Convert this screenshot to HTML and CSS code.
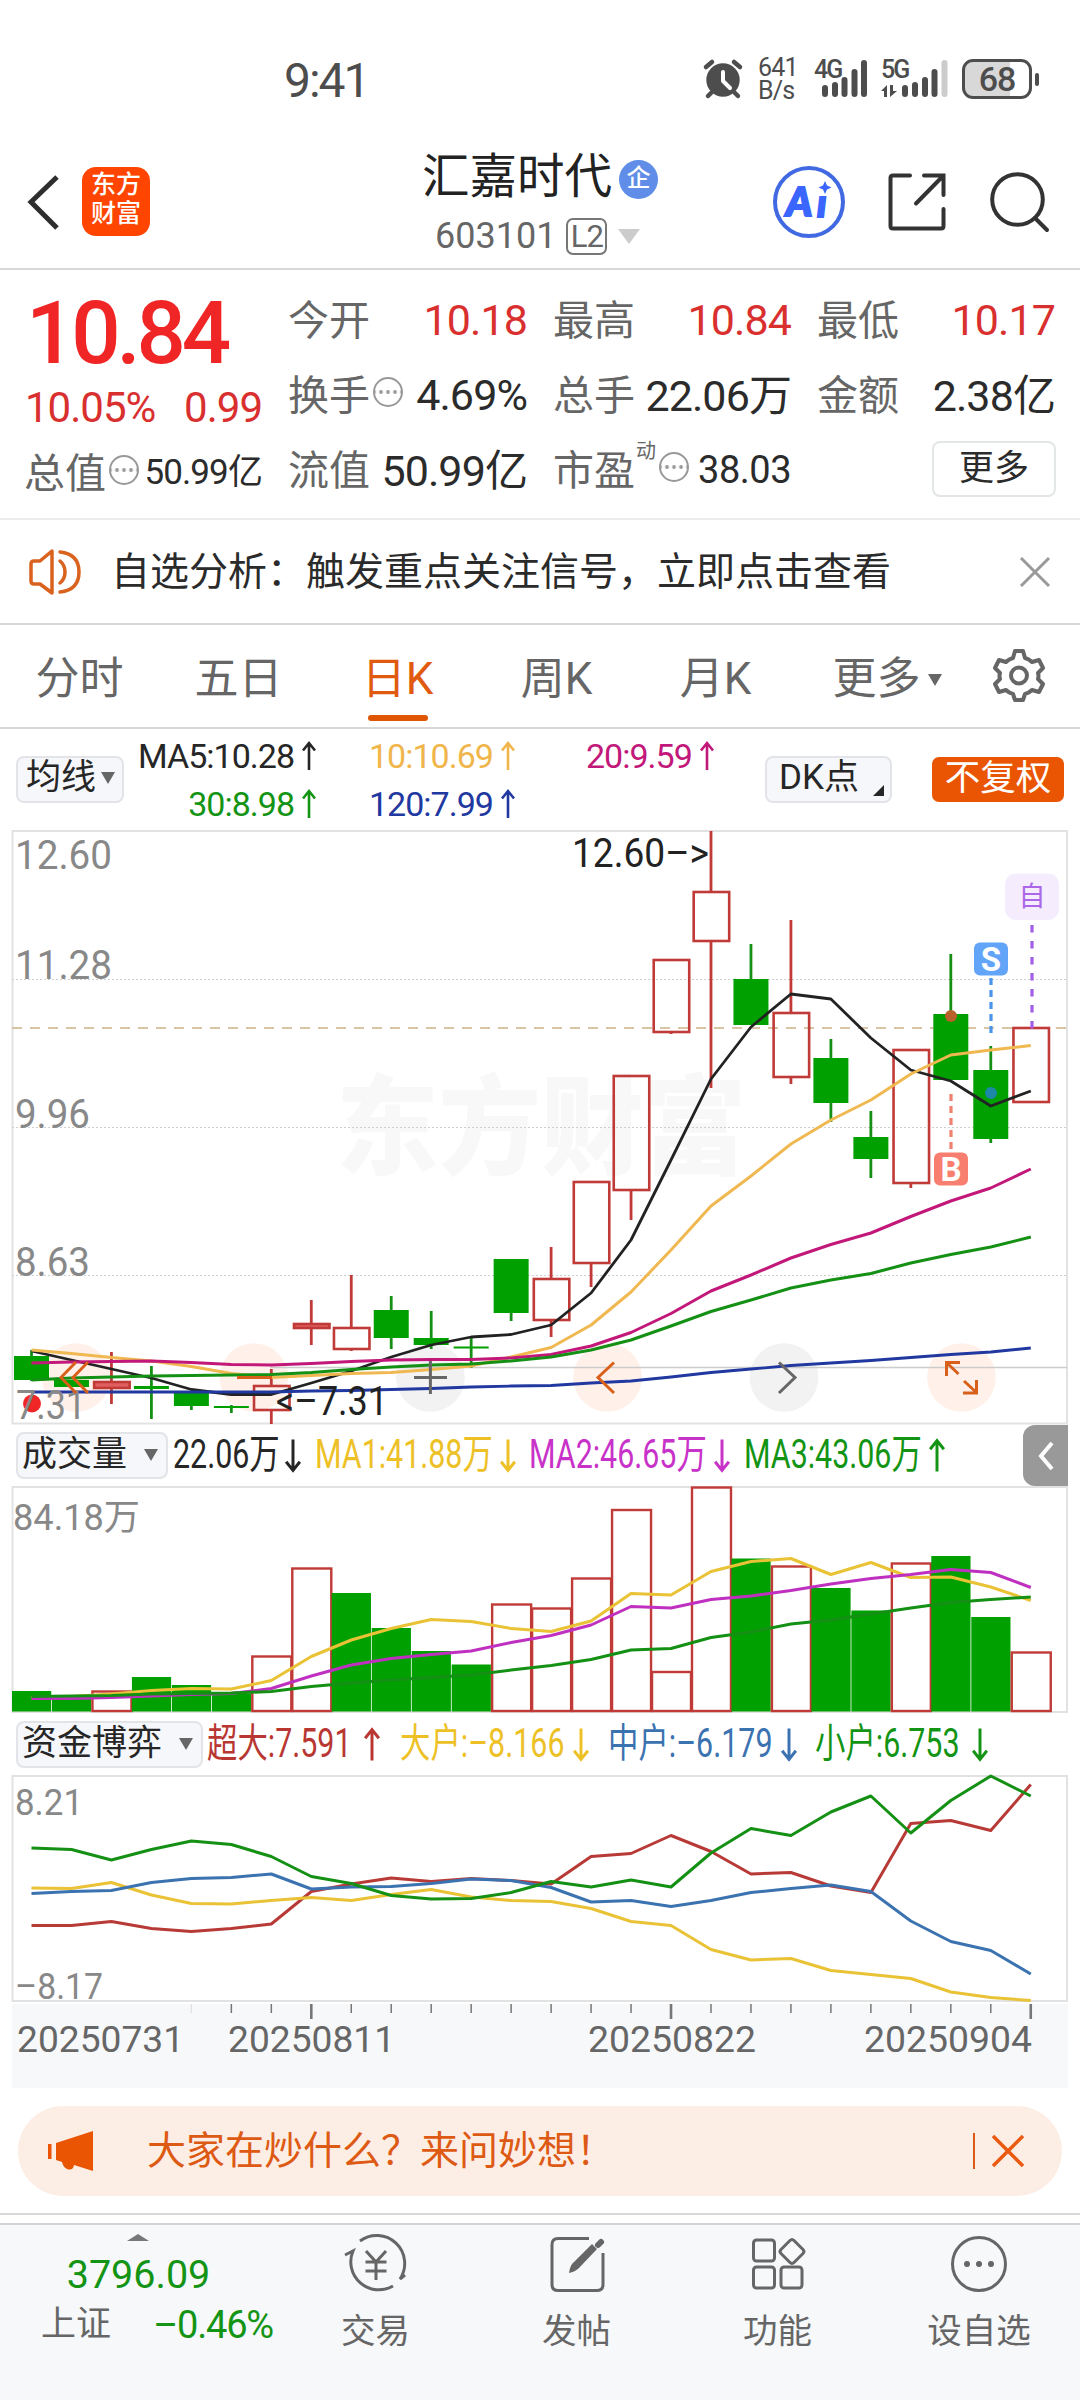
FILE: index.html
```
<!DOCTYPE html>
<html lang="zh-CN">
<head>
  <meta charset="UTF-8" />
  <meta name="viewport" content="width=device-width, initial-scale=1.0"/>
  <title>汇嘉时代 603101</title>
  <link rel="stylesheet" href="styles.css">
</head>
<body>
  <!-- Status bar -->
  <div class="status">
    <span class="clock">9:41</span>
    <div class="status-icons">
      <svg class="alarm" width="40" height="40" viewBox="0 0 40 40">
        <circle cx="20" cy="21" r="16.7" fill="#4d4d4d"/>
        <path d="M3 8l6-5M37 8l-6-5M9 33l-4 4M31 33l4 4" stroke="#4d4d4d" stroke-width="4.5" stroke-linecap="round"/>
        <path d="M20 13v9l7 7" stroke="#fff" stroke-width="4" fill="none" stroke-linecap="round" stroke-linejoin="round"/>
      </svg>
      <span class="speed">641<br>B/s</span>
      <svg class="signal" width="54" height="40" viewBox="0 0 54 40">
        <text x="0" y="19" class="net">4G</text>
        <path d="M11 29v6M21 26v9M30.5 21v14M40.5 13v22M50 4v31" stroke="#4d4d4d" stroke-width="6" stroke-linecap="round"/>
      </svg>
      <svg class="signal2" width="68" height="40" viewBox="0 0 68 40">
        <text x="0" y="19" class="net">5G</text>
        <path d="M0 32l6-6v12H3V32zM9 26h3v6h4l-7 6z" fill="#4d4d4d"/>
        <path d="M24 29v6M34 26v9M44 21v14M53.5 13v22" stroke="#4d4d4d" stroke-width="6" stroke-linecap="round"/>
        <path d="M63.5 4v31" stroke="#ccc" stroke-width="6" stroke-linecap="round"/>
      </svg>
      <span class="battery">68</span>
      <span class="nub"></span>
    </div>
  </div>

  <!-- Header -->
  <header class="header">
    <svg class="back" width="34" height="60" viewBox="0 0 34 60"><path d="M30 5L4 30l26 26" fill="none" stroke="#2e2e2e" stroke-width="5"/></svg>
    <div class="logo">东方<br>财富</div>
    <div class="title">
      <div class="name"><span>汇嘉时代</span><span class="corp">企</span></div>
      <div class="code">603101<span class="l2">L2</span><span class="tri-down big"></span></div>
    </div>
    <svg class="ai" width="74" height="74" viewBox="0 0 74 74">
      <circle cx="37" cy="37" r="34" fill="none" stroke="#4169e1" stroke-width="4"/>
      <text x="14" y="51" class="ai-a">A</text>
      <text x="45" y="52" class="ai-i">ı</text>
      <path d="M53 16l2 4.500 4.500 2-4.500 2-2 4.500-2-4.500-4.500-2 4.500-2z" fill="#3a66ff"/>
    </svg>
    <svg class="share" width="60" height="60" viewBox="0 0 60 60">
      <path d="M23 3.5H6Q3.500 3.500 3.500 6V54q0 2.500 2.500 2.500H54q2.500 0 2.500-2.500V37M37 3.500H56.500V23M56 4L29 31.500" fill="none" stroke="#333" stroke-width="4" stroke-linecap="round"/>
    </svg>
    <svg class="search" width="62" height="62" viewBox="0 0 62 62">
      <circle cx="28.500" cy="28.500" r="25.300" fill="none" stroke="#333" stroke-width="4"/>
      <path d="M46 47l12 12" stroke="#333" stroke-width="4" stroke-linecap="round"/>
    </svg>
  </header>

  <!-- Quote numbers -->
  <section class="quote">
    <div class="col c1">
      <div class="price">10.84</div>
      <div class="change"><span>10.05%</span><span>0.99</span></div>
      <div class="item"><label>总值</label><i class="dots"></i><b class="small">50.99亿</b></div>
    </div>
    <div class="col">
      <div class="item"><label>今开</label><b class="up">10.18</b></div>
      <div class="item"><label>换手</label><i class="dots"></i><b>4.69%</b></div>
      <div class="item"><label>流值</label><b class="cn">50.99亿</b></div>
    </div>
    <div class="col">
      <div class="item"><label>最高</label><b class="up">10.84</b></div>
      <div class="item"><label>总手</label><b class="cn">22.06万</b></div>
      <div class="item"><label>市盈</label><sup>动</sup><i class="dots"></i><b class="mid">38.03</b></div>
    </div>
    <div class="col">
      <div class="item"><label>最低</label><b class="up">10.17</b></div>
      <div class="item"><label>金额</label><b class="cn">2.38亿</b></div>
      <div class="item"><button class="more">更多</button></div>
    </div>
  </section>

  <div class="alert">
    <svg width="54" height="46" viewBox="0 0 54 46" fill="none" stroke="#d9621e" stroke-width="3.500" stroke-linejoin="round">
      <path d="M2 15q0-3 3-3h6L23 2v42L11 35H5q-3 0-3-3z"/>
      <path d="M31 12q5 4 5 11t-5 11M31 3q19 2 19 20T31 43" stroke-linecap="round"/>
    </svg>
    <span>自选分析：触发重点关注信号，立即点击查看</span>
    <svg class="close" width="32" height="30" viewBox="0 0 32 30"><path d="M2 1l28 28M30 1L2 29" stroke="#999" stroke-width="3"/></svg>
  </div>

  <!-- Period tabs -->
  <nav class="tabs">
    <a>分时</a>
    <a>五日</a>
    <a class="active">日K</a>
    <a>周K</a>
    <a>月K</a>
    <a class="last">更多<span class="tri-down"></span></a>
    <svg width="52" height="54" viewBox="0 0 52 54" fill="none" stroke="#666" stroke-width="4" stroke-linejoin="round">
      <path d="M22 3h8l2 7q4 1 7 4l7-2 4 8-5 5q1 3 0 6l5 5-4 8-7-2q-3 3-7 4l-2 6h-8l-2-6q-4-1-7-4l-7 2-4-8 5-5q-1-3 0-6l-5-5 4-8 7 2q3-3 7-4z"/>
      <circle cx="26" cy="27.500" r="8"/>
    </svg>
  </nav>

  <div class="ma-row">
    <span class="pill">均线<span class="tri-down"></span></span>
    <div class="ma">
      <span class="k right">MA5:10.28<svg class="arw" viewBox="0 0 14 30"><use href="#up"/></svg></span>
      <span class="y">10:10.69<svg class="arw" viewBox="0 0 14 30"><use href="#up"/></svg></span>
      <span class="m">20:9.59<svg class="arw" viewBox="0 0 14 30"><use href="#up"/></svg></span>
      <span class="g right">30:8.98<svg class="arw" viewBox="0 0 14 30"><use href="#up"/></svg></span>
      <span class="b">120:7.99<svg class="arw" viewBox="0 0 14 30"><use href="#up"/></svg></span>
    </div>
    <span class="pill dk">DK点</span>
    <span class="fq">不复权</span>
  </div>

  <svg id="kline" width="1080" height="595" viewBox="0 0 1080 595"></svg>

  <div class="legend">
    <span class="pill">成交量<span class="tri-down"></span></span>
    <div class="vals v1">
      <span class="k"><em>22.06万</em><svg class="arw" viewBox="0 0 14 30"><use href="#down"/></svg></span>
      <span class="y2"><em>MA1:41.88万</em><svg class="arw" viewBox="0 0 14 30"><use href="#down"/></svg></span>
      <span class="p"><em>MA2:46.65万</em><svg class="arw" viewBox="0 0 14 30"><use href="#down"/></svg></span>
      <span class="g"><em>MA3:43.06万</em><svg class="arw" viewBox="0 0 14 30"><use href="#up"/></svg></span>
    </div>
    <span class="drawer"><svg width="20" height="32" viewBox="0 0 20 32"><path d="M16 3L5 16l11 13" fill="none" stroke="#fff" stroke-width="4"/></svg></span>
  </div>

  <svg id="volume" width="1080" height="228" viewBox="0 0 1080 228"></svg>

  <div class="legend second">
    <span class="pill">资金博弈<span class="tri-down"></span></span>
    <div class="vals v2">
      <span class="r"><em>超大:7.591</em><svg class="arw" viewBox="0 0 14 30"><use href="#up"/></svg></span>
      <span class="y2"><em class="neg">大户:–8.166</em><svg class="arw" viewBox="0 0 14 30"><use href="#down"/></svg></span>
      <span class="bl"><em class="neg">中户:–6.179</em><svg class="arw" viewBox="0 0 14 30"><use href="#down"/></svg></span>
      <span class="g"><em>小户:6.753</em><svg class="arw" viewBox="0 0 14 30"><use href="#down"/></svg></span>
    </div>
  </div>

  <svg id="flow" width="1080" height="313" viewBox="0 0 1080 313"></svg>

  <div class="ask">
    <svg width="48" height="42" viewBox="0 0 48 42" fill="#ea5504"><path d="M1 14h3.500v15H1zM9 13L46 1v40L27 35q-1 6-7 4-4-2-5-7l-6-2z"/></svg>
    <span>大家在炒什么？来问妙想！</span>
    <i class="bar"></i>
    <svg width="34" height="34" viewBox="0 0 34 34"><path d="M2 2l30 30M32 2L2 32" stroke="#ea5a10" stroke-width="3.500"/></svg>
  </div>
  <div class="gap"></div>

  <!-- Bottom bar -->
  <footer class="bottom">
    <div class="index">
      <span class="tri-up"></span>
      <div class="idx-val">3796.09</div>
      <div class="idx-row"><span>上证</span><span class="g">–0.46%</span></div>
    </div>
    <div class="nav-item">
      <svg width="66" height="60" viewBox="0 0 66 60" fill="none" stroke="#666" stroke-width="3">
        <path d="M17 7A28 28 0 0 1 57 45l5-4M50 52A28 28 0 0 1 10 17l-8 4"/>
        <path d="M23 17l10 11 10-11M22.500 28h21M22.500 37h21M33 28v18"/>
      </svg>
      <span>交易</span>
    </div>
    <div class="nav-item">
      <svg width="66" height="60" viewBox="0 0 66 60" fill="none" stroke="#666" stroke-width="3">
        <path d="M45 4.500H14q-6 0-6 6v40q0 6 6 6h39q6 0 6-6V19"/>
        <path d="M25 39q1-8 5-11L48 10l5 5-18 19q-4 4-10 5z" fill="#666" stroke="none"/>
        <path d="M54 11l3-3" stroke-width="6" stroke-linecap="round"/>
      </svg>
      <span>发帖</span>
    </div>
    <div class="nav-item">
      <svg width="66" height="60" viewBox="0 0 66 60" fill="none" stroke="#666" stroke-width="3">
        <rect x="8.500" y="6" width="21" height="21" rx="3"/>
        <rect x="8.500" y="33" width="21" height="21" rx="3"/>
        <rect x="36" y="33" width="21" height="21" rx="3"/>
        <path d="M45 6.500q2-2 4 0l9 9q2 2 0 4l-9 9q-2 2-4 0l-9-9q-2-2 0-4z"/>
      </svg>
      <span>功能</span>
    </div>
    <div class="nav-item">
      <svg width="66" height="60" viewBox="0 0 66 60" fill="#666">
        <circle cx="33" cy="30" r="26.500" fill="none" stroke="#666" stroke-width="3"/>
        <circle cx="21" cy="30" r="3"/><circle cx="33" cy="30" r="3"/><circle cx="45" cy="30" r="3"/>
      </svg>
      <span>设自选</span>
    </div>
  </footer>

  <svg class="defs">
    <defs>
      <path id="up" d="M7 29V2M1 9.500L7 2l6 7.500" fill="none" stroke="currentColor" stroke-width="2.600"/>
      <path id="down" d="M7 1v27M1 20.500L7 28l6-7.500" fill="none" stroke="currentColor" stroke-width="2.600"/>
    </defs>
  </svg>
  <script src="chart.js"></script>
</body>
</html>
```
FILE: styles.css
```
* {
  box-sizing: border-box;
}

body {
  margin: 0;
  width: 1080px;
  height: 2400px;
  overflow: hidden;
  background: #fff;
  font-family: Roboto, "Noto Sans CJK SC", sans-serif;
  color: #2b2b2b;
}

svg {
  display: block;
  flex: none;
  overflow: visible;
}

.defs {
  width: 0;
  height: 0;
}

/* colors */
.k { color: #262626; }
.y { color: #f0b64c; }
.y2 { color: #edc126; }
.m { color: #c2187a; }
.g { color: #149414; }
.b { color: #2138a0; }
.p { color: #c832c8; }
.r { color: #b83733; }
.bl { color: #3b72b0; }

/* triangles */
.tri-down {
  display: inline-block;
  border: 7.5px solid transparent;
  border-top: 12px solid #666;
  border-bottom: 0;
}

.tri-down.big {
  border-width: 15px 11px 0;
  border-top-color: #ccc;
  margin-left: 11px;
}

.tri-up {
  border: 11px solid transparent;
  border-bottom: 7px solid #777;
  border-top: 0;
}

/* status bar */
.status {
  height: 135px;
  padding: 52px 41px 0 284px;
  display: flex;
  justify-content: space-between;
  color: #4d4d4d;
}

.clock {
  font-size: 48px;
  line-height: 58px;
  letter-spacing: -2px;
}

.status-icons {
  display: flex;
  height: 54px;
  align-items: center;
}

.speed {
  font-size: 25px;
  line-height: 23px;
  width: 40px;
  margin-left: 15px;
  letter-spacing: -0.8px;
  white-space: nowrap;
}

.signal { margin-left: 16px; }
.signal2 { margin-left: 13px; }

.net {
  font-size: 25px;
  font-weight: 500;
  letter-spacing: -2px;
  fill: #4d4d4d;
}

.battery {
  width: 70px;
  height: 40px;
  margin-left: 13px;
  border: 3px solid #4d4d4d;
  border-radius: 11px;
  background: linear-gradient(90deg, #d8d8d8 70%, #fff 70%);
  font-size: 34px;
  font-weight: 500;
  line-height: 35px;
  text-align: center;
  letter-spacing: -1px;
}

.nub {
  width: 4px;
  height: 13px;
  margin-left: 3px;
  border-radius: 2px;
  background: #4d4d4d;
}

/* header */
.header {
  height: 135px;
  border-bottom: 2px solid #d8d8d8;
  display: flex;
  align-items: center;
  padding-left: 27px;
}

.logo {
  width: 68px;
  height: 69px;
  margin-left: 21px;
  padding-top: 3px;
  border-radius: 14px;
  background: #ff4500;
  color: #fff;
  font-size: 25px;
  font-weight: 500;
  line-height: 29px;
  text-align: center;
}

.title {
  width: 244px;
  margin: 0 0 0 272px;
  height: 127px;
}

.name {
  display: flex;
  align-items: flex-start;
  height: 85px;
  font-size: 47.5px;
  line-height: 78px;
  color: #222;
  white-space: nowrap;
}

.corp {
  width: 39px;
  height: 39px;
  margin: 22px 0 0 7px;
  border-radius: 50%;
  background: #5f8de8;
  color: #fff;
  font-size: 24px;
  font-weight: 500;
  line-height: 37px;
  text-align: center;
}

.code {
  display: flex;
  align-items: center;
  height: 30px;
  margin-top: -2px;
  padding-left: 13px;
  font-size: 36px;
  color: #666;
}

.l2 {
  margin-left: 10px;
  width: 41px;
  height: 37px;
  border: 2px solid #777;
  border-radius: 7px;
  font-size: 31px;
  line-height: 34px;
  text-align: center;
  letter-spacing: -1px;
}

.ai { margin-left: 106px; }

.ai-a, .ai-i {
  font-family: Lato, sans-serif;
  font-size: 38px;
  font-weight: 900;
  font-style: italic;
  fill: #3a66ff;
  stroke: #3a66ff;
  stroke-width: 2;
}

.ai-a { font-size: 40px; }
.share { margin-left: 41px; }
.search { margin-left: 42px; }

/* quote */
.quote {
  height: 250px;
  border-bottom: 2px solid #ececec;
  padding: 12px 25px 0 24px;
  display: grid;
  grid-template-columns: 238px 239px 238px 238px;
  column-gap: 26px;
}

.price {
  height: 92px;
  padding-left: 2px;
  font-size: 87px;
  font-weight: 500;
  line-height: 102px;
  letter-spacing: -4.2px;
  color: #f02525;
}

.change {
  display: flex;
  justify-content: space-between;
  height: 64px;
  line-height: 68px;
  font-size: 42px;
  letter-spacing: -1px;
  color: #d9302f;
  padding-left: 1px;
}

.item {
  height: 75px;
  display: flex;
  align-items: center;
  white-space: nowrap;
}

.c1 .item {
  height: 69px;
}

.item label {
  font-size: 41px;
  margin-top: -6px;
  color: #666;
}

.item b {
  margin-left: auto;
  font-weight: 400;
  font-size: 43px;
  letter-spacing: -0.9px;
}

.item b.up { color: #d9302f; }
.item b.cn { margin-top: -6px; }
.item b.small { font-size: 35px; margin-top: -8px; }
.item b.mid { font-size: 38px; letter-spacing: -0.5px; }

.item sup {
  align-self: flex-start;
  font-size: 20px;
  line-height: 24px;
  margin: 7px 0 0 1px;
  color: #666;
}

.dots {
  width: 30px;
  height: 30px;
  margin: -5px 0 0 3px;
  border: 2.5px solid #999;
  border-radius: 50%;
  background: radial-gradient(circle, #999 1.6px, transparent 2.2px) 50% 50% / 7px 26px repeat-x;
}

.more {
  width: 124px;
  height: 56px;
  margin-left: auto;
  margin-right: -1px;
  margin-top: -2px;
  border: 2px solid #e3e6e6;
  border-radius: 8px;
  background: #fff;
  font: inherit;
  font-size: 35px;
  line-height: 48px;
  padding: 0;
  color: #2b2b2b;
}

/* alert */
.alert {
  height: 105px;
  border-bottom: 2px solid #d8d8d8;
  padding: 0 29px 0 29px;
  display: flex;
  align-items: center;
  font-size: 39px;
}

.alert span {
  margin: -8px 0 0 28px;
  white-space: nowrap;
}

.alert .close { margin-left: auto; }

/* tabs */
.tabs {
  height: 104px;
  border-bottom: 2px solid #d8d8d8;
  padding: 0 0 2px 0;
  display: flex;
  align-items: center;
  font-size: 44px;
  color: #666;
}

.tabs a {
  position: relative;
  width: 159px;
  text-align: center;
  white-space: nowrap;
}

.tabs .last {
  width: 198px;
  padding-right: 14px;
}

.tabs a .tri-down { margin: 0 0 8px 7px; }

.tabs .active { color: #e05a10; }

.tabs .active::after {
  content: "";
  position: absolute;
  left: 50px;
  bottom: -14px;
  width: 60px;
  height: 6px;
  border-radius: 3px;
  background: #e05504;
}

/* moving averages */
.ma-row {
  height: 101px;
  display: flex;
  align-items: center;
  padding-left: 16px;
}

.pill {
  display: flex;
  align-items: center;
  justify-content: space-between;
  height: 47px;
  width: 108px;
  padding: 0 7px 4px 8px;
  border: 2px solid #e2e4e8;
  border-radius: 8px;
  background: #f6f7fa;
  color: #262626;
  font-size: 35px;
  line-height: 40px;
  white-space: nowrap;
}

.ma {
  display: grid;
  grid-template-columns: 177px 164px 163px;
  column-gap: 53px;
  grid-auto-rows: 48px;
  width: 626px;
  padding-left: 15px;
  font-size: 34px;
  line-height: 48px;
  letter-spacing: -1px;
}

.ma span {
  display: flex;
  align-items: center;
}

.ma .right { justify-content: flex-end; }

.arw {
  width: 14px;
  height: 30px;
  margin-left: 8px;
}

.dk {
  position: relative;
  width: 127px;
  margin-left: 15px;
  padding-left: 12px;
}

.dk::after {
  content: "";
  position: absolute;
  right: 6px;
  bottom: 5px;
  border-left: 11px solid transparent;
  border-bottom: 11px solid #262626;
}

.fq {
  width: 132px;
  height: 45px;
  margin-left: 40px;
  border-radius: 7px;
  background: #ea5504;
  color: #fff;
  font-size: 35.5px;
  line-height: 42px;
  text-align: center;
}

/* chart legends */
.legend {
  height: 61px;
  padding-left: 16px;
  display: flex;
  align-items: center;
}

.legend .pill { width: 152px; padding: 0 8px 2px 4px; }
.legend.second { height: 61px; }
.legend.second .pill { width: 187px; }

.vals {
  display: grid;
  margin: -1px 0 0 5px;
  font-size: 40px;
  line-height: 54px;
}

.v1 { grid-template-columns: 142px 214px 215px 279px; }
.v2 { grid-template-columns: 193px 208px 207px 220px; margin-left: 4px; }

.vals span {
  display: flex;
  align-items: center;
}

.vals em {
  font-style: normal;
  white-space: nowrap;
  transform: scaleX(0.76);
  transform-origin: 0 50%;
}

.vals .arw {
  width: 16px;
  height: 35px;
}

.v1 em { margin-right: -36px; }
.v1 span + span em { margin-right: -57px; }
.v2 em { margin-right: -42px; }
.v2 em.neg { margin-right: -52px; }
.v2 .arw { margin-left: 9px; }

.drawer {
  width: 45px;
  height: 61px;
  border-radius: 12px 0 0 12px;
  background: #999;
  display: flex;
  align-items: center;
  justify-content: center;
}

/* ask banner */
.ask {
  width: 1044px;
  height: 90px;
  margin: 18px 0 0 18px;
  padding: 0 37px 0 29px;
  border-radius: 45px;
  background: #fdeee5;
  color: #dd5a14;
  display: flex;
  align-items: center;
  font-size: 39px;
}

.ask span {
  margin: -8px 0 0 52px;
}

.ask .bar {
  margin-left: auto;
  margin-right: 16px;
  width: 2px;
  height: 36px;
  background: #dd5a14;
}

.gap {
  height: 12px;
  margin-top: 17px;
  border-top: 2px solid #d8d8d8;
  border-bottom: 2px solid #d0d4d8;
}

/* bottom bar */
.bottom {
  height: 175px;
  background: #f6f8fa;
  display: grid;
  grid-template-columns: 275px 201px 201px 201px 202px;
  color: #666;
}

.index {
  display: flex;
  flex-direction: column;
  align-items: center;
  padding-top: 9px;
}

.idx-val {
  margin-top: 9px;
  height: 50px;
  line-height: 50px;
  padding-left: 2px;
  font-size: 39.5px;
  color: #149414;
}

.idx-row {
  width: 275px;
  padding: 0 2px 0 41px;
  display: flex;
  justify-content: space-between;
  align-items: center;
  font-size: 35px;
  line-height: 50px;
}

.idx-row .g { font-size: 38px; letter-spacing: -1.2px; }

.nav-item {
  display: flex;
  flex-direction: column;
  align-items: center;
  padding-top: 9px;
  font-size: 34.5px;
}

.nav-item span {
  margin-top: 11px;
  line-height: 53px;
}

/* svg charts */
.axis { font-size: 40px; fill: #888; }
.note { font-size: 40px; fill: #222; }
.vaxis { font-size: 36px; fill: #888; }
.date { font-size: 36px; fill: #666; }
.mark { font-size: 33px; font-weight: 700; fill: #fff; text-anchor: middle; }
.self { font-size: 27px; fill: #ac66e8; text-anchor: middle; }
.watermark { font-size: 108px; font-weight: 900; fill: #f8f8f8; }
```
FILE: chart.js
```
const RED = '#c03a37';
const GREEN = '#00a000';
const X0 = 31.5, STEP = 39.97;

const cx = i => X0 + STEP * i;

function line(ys, color, w = 3) {
  const pts = ys.map((y, i) => `${cx(i).toFixed(1)},${y}`).join(' ');
  return `<polyline points="${pts}" fill="none" stroke="${color}" stroke-width="${w}" stroke-linejoin="round"/>`;
}

function seg(x1, y1, x2, y2, color, w = 2, extra = '') {
  return `<path d="M${x1} ${y1}L${x2} ${y2}" stroke="${color}" stroke-width="${w}" ${extra}/>`;
}

function label(x, y, cls, text, len) {
  const fit = len ? ` textLength="${len}" lengthAdjust="spacingAndGlyphs"` : '';
  return `<text x="${x}" y="${y}" class="${cls}"${fit}>${text}</text>`;
}

// [type, high, top, bottom, low]
const candles = [
  ['g', 520, 526, 550, 551], ['g', 550, 550, 557, 557], ['r', 522, 552, 558, 574],
  ['g', 536, 556, 559, 589], ['g', 562, 562, 576, 580], ['g', 575, 576, 578, 583],
  ['r', 539, 556, 580, 594], ['r', 470, 494, 498, 515], ['r', 445, 498, 519, 521],
  ['g', 466, 480, 508, 519], ['g', 481, 508, 515, 519], ['g', 506, 516.5, 518.5, 538],
  ['g', 429, 429, 483, 491], ['r', 417, 449, 490, 507], ['r', 352, 352, 433, 457],
  ['r', 246, 246, 360, 390], ['r', 130, 130, 202, 204], ['r', 1, 62, 111, 258],
  ['g', 114, 149, 195, 195], ['r', 90, 183, 247, 254], ['g', 209, 228, 273, 292],
  ['g', 281, 307, 329, 348], ['r', 220, 220, 353, 358], ['g', 124, 184, 250, 250],
  ['g', 216, 240, 309, 313], ['r', 198, 198, 272, 272]
];

const ma5 = [521, 530, 539, 548, 559.5, 564.5, 564.5, 553, 541, 527, 515, 507, 504.5, 495, 463, 410, 330, 249, 197, 164, 169, 208, 240, 251, 276, 261];
const ma10 = [520, 523.5, 527.5, 531, 536.5, 543.5, 547.5, 545.5, 543.5, 542.5, 539.5, 536, 527, 517.5, 495, 462, 420, 376, 346, 314, 290, 270, 244, 225, 220, 215.5];
const ma20 = [533, 532, 531.5, 531, 532.5, 534.5, 535, 533.5, 531.5, 530, 529.5, 529.5, 528, 524.5, 516, 502.5, 483.5, 461, 445, 428, 414.5, 403, 386.5, 371, 358, 339];
const ma30 = [550, 548, 547, 546, 545.5, 545, 544.5, 542.5, 539.5, 537, 535, 534, 531, 527, 520, 510, 496, 481.5, 470, 458, 450, 443.5, 433, 424.5, 417, 407];
const ma120 = [562, 562, 562, 562, 562, 562, 562, 561, 560.5, 559.5, 558.5, 557, 556, 555.5, 553, 551, 547, 542.5, 539, 535.5, 533, 530.5, 527.5, 524.5, 522, 518];

function drawKline() {
  let s = '';
  s += label(336, 336, 'watermark', '东方财富', 410);
  s += '<rect x="12.5" y="1" width="1054.500" height="592.500" fill="none" stroke="#e2e2e2" stroke-width="2"/>';
  [149.500, 297.500, 445.500].forEach(y => s += seg(12, y, 1067, y, '#cfcfcf', 1, 'stroke-dasharray="2 2"'));
  s += seg(12, 198, 1067, 198, '#cdb287', 1.5, 'stroke-dasharray="10 8"');

  // round tool buttons
  [[76, '#fff1ea'], [253.8, '#fff1ea'], [430.4, '#f2f2f2'], [607.500, '#fff1ea'], [784, '#f2f2f2'], [961.500, '#fff1ea']]
    .forEach(([x, c]) => s += `<circle cx="${x}" cy="547.500" r="34.300" fill="${c}"/>`);
  s += seg(270, 537.500, 1067, 537.500, '#ccc', 1.5);

  candles.forEach(([t, h, top, bot, l], i) => {
    const x = cx(i);
    if (t === 'g') {
      s += seg(x, h, x, l, '#159015', 2.8);
      s += `<rect x="${x - 17.500}" y="${top}" width="35" height="${bot - top}" fill="${GREEN}"/>`;
    } else {
      const fill = bot - top < 8 ? '#e06060' : 'none';
      s += seg(x, h, x, top, RED, 2.8) + seg(x, bot, x, l, RED, 2.8);
      s += `<rect x="${x - 17.300}" y="${top}" width="35.500" height="${bot - top}" fill="${fill}" stroke="${RED}" stroke-width="2.600"/>`;
    }
  });

  s += line(ma5, '#222', 2.8) + line(ma10, '#f0b850') + line(ma20, '#c2187a') + line(ma30, '#149014') + line(ma120, '#2138a0', 2.8);

  s += '<circle cx="32" cy="573.500" r="9" fill="#f02525"/>';
  s += label(15, 39, 'axis', '12.60', 97);
  s += label(15, 149, 'axis', '11.28', 97);
  s += label(15, 298, 'axis', '9.96', 75);
  s += label(15, 446, 'axis', '8.63', 75);
  s += label(16, 589, 'axis', '7.31', 70);
  s += label(572, 37, 'note', '12.60–&gt;', 137);
  s += label(276, 585, 'note', '&lt;–7.31', 112);

  s += '<g fill="none" stroke="#d9601a" stroke-width="3">' +
    '<path d="M76 532L61 547.500L76 563M88 532L73 547.500L88 563"/>' +
    '<path d="M237 547.500H272M614 532.500L598 547.500L614 563"/>' +
    '<path d="M960 532.500H946.500V546M946.500 532.500L958.500 544M964 551L976.500 562.500M976.500 550V563H963"/></g>';
  s += '<path d="M414 547.500H447M430.400 531V564M779 532.500L795 547.500L779 563" fill="none" stroke="#666" stroke-width="3"/>';

  // signals
  s += seg(1032, 95, 1032, 199, '#a45fe6', 3.200, 'stroke-dasharray="7.500 8.500"');
  s += '<rect x="1005" y="43.500" width="54" height="46.500" rx="11" fill="#f5ecfe"/>' + label(1032, 76, 'self', '自');
  s += seg(991, 148, 991, 204, '#4a94ec', 3.200, 'stroke-dasharray="7 5"');
  s += '<rect x="974" y="112.500" width="34" height="33" rx="6" fill="#62a4f8"/>' + label(991, 141, 'mark', 'S');
  s += seg(951, 264, 951, 320, '#f0806f', 3.200, 'stroke-dasharray="7 5"');
  s += '<rect x="934" y="322.500" width="34" height="33" rx="6" fill="#f87e6f"/>' + label(951, 350.500, 'mark', 'B');
  s += '<circle cx="951" cy="186" r="6" fill="#b8602a"/><circle cx="991" cy="263" r="6" fill="#1d87a8"/>';
  document.getElementById('kline').innerHTML = s;
}

const vols = [
  ['g', 205], ['g', 209], ['r', 205.5], ['g', 191], ['g', 199], ['g', 207.5], ['r', 170.5], ['r', 82.5],
  ['g', 107], ['g', 142], ['g', 165], ['g', 178.5], ['r', 118.5], ['r', 122.5], ['r', 92.5], ['r', 24],
  ['r', 186], ['r', 1.5], ['g', 72.5], ['r', 80.5], ['g', 102], ['g', 124.5], ['r', 77.5], ['g', 70],
  ['g', 131], ['r', 166.5]
];
const vma1 = [211.5, 210.5, 208, 204.5, 202.5, 203, 194.5, 170.5, 154, 142.5, 133.5, 135.5, 142.5, 145.5, 135, 107.5, 109, 85.5, 75.5, 72.5, 88.5, 76.5, 91.5, 91, 101, 114.5];
const vma2 = [212.5, 212.5, 211.5, 210, 208.5, 207.5, 202.5, 190, 179, 172.5, 168.5, 165, 156.5, 149.5, 139, 120.5, 122, 113.5, 110, 104.5, 98, 92.5, 88.5, 83.5, 86.5, 101.5];
const vma3 = [210.5, 210, 209.5, 208, 207.5, 207, 205.5, 200.5, 197, 194, 191.5, 189, 184, 179.5, 173.5, 164, 162.5, 151.5, 146, 138, 134, 128, 122, 116.5, 113.5, 111];

function drawVolume() {
  let s = '<rect x="12.500" y="1" width="1054.500" height="225" fill="none" stroke="#e2e2e2" stroke-width="2"/>';
  s += label(13, 44, 'vaxis', '84.18万', 127);
  vols.forEach(([t, y], i) => {
    const x = 12 + STEP * i;
    if (t === 'g') {
      s += `<rect x="${x}" y="${y}" width="39.200" height="${225.500 - y}" fill="${GREEN}"/>`;
    } else {
      s += `<rect x="${x + 0.500}" y="${y}" width="39" height="${225 - y}" fill="#fff" stroke="${RED}" stroke-width="2.400"/>`;
    }
  });
  s += line(vma1, '#e9c235') + line(vma2, '#c030c0') + line(vma3, '#149014');
  document.getElementById('volume').innerHTML = s;
}

const big = [150.5, 150.5, 146.5, 153.5, 156.5, 153.5, 149, 116.5, 109, 103, 106.5, 103.5, 105.5, 109, 81.5, 78.5, 60.5, 76.5, 99, 97.5, 111, 117.5, 48.5, 45.5, 55.5, 9.5];
const large = [113, 113.5, 107.5, 120, 128.5, 129, 125.5, 122.5, 125.5, 119.5, 114.5, 122, 125.5, 126.5, 133.5, 146.5, 150.5, 174.5, 185, 183.5, 195.5, 199.5, 203.5, 217, 222.5, 225.5];
const mid = [118.5, 116.5, 115.5, 107.5, 103.5, 102.5, 99, 114, 112, 111.5, 108.5, 104, 105.5, 112.5, 127, 125.5, 131.5, 125.5, 117.5, 113.5, 110, 116.5, 146, 166.5, 175.5, 199];
const small = [73, 74.5, 85, 74.5, 66, 69.5, 81.5, 101.5, 108.5, 120.5, 124, 123.5, 117.5, 106.5, 112, 105, 112, 78, 53.5, 60.5, 37, 21, 58, 25.5, 1, 21];

function drawFlow() {
  let s = '<rect x="12.500" y="1" width="1054.500" height="225" fill="none" stroke="#e2e2e2" stroke-width="2"/>';
  s += '<rect x="12" y="229" width="1056" height="84" fill="#f7f8fa"/>';
  s += label(15, 40, 'vaxis', '8.21', 68);
  s += label(15, 224, 'vaxis', '–8.17', 88);
  s += line(big, '#b83a37') + line(large, '#e9c235') + line(mid, '#3b72b0') + line(small, '#149014');
  for (let i = 4; i < 26; i++) {
    const major = i === 7 || i === 16 || i === 25;
    s += seg(cx(i), 229, cx(i), major ? 244 : 238, i === 4 ? '#e2e2e2' : '#777', major ? 2.6 : 1.5);
  }
  s += label(17, 277, 'date', '20250731', 167);
  s += label(228, 277, 'date', '20250811', 167);
  s += label(588, 277, 'date', '20250822', 168);
  s += label(864, 277, 'date', '20250904', 168);
  document.getElementById('flow').innerHTML = s;
}

drawKline();
drawVolume();
drawFlow();
```
